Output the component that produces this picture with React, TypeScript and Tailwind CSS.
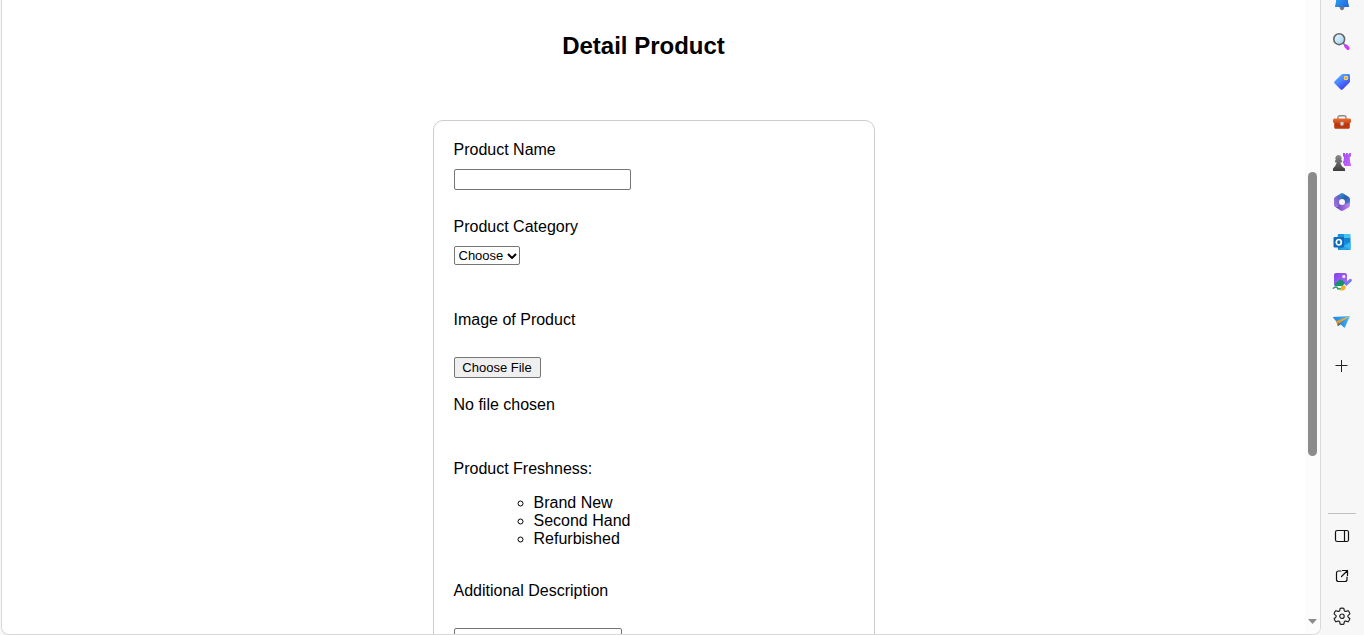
import { useRef, useState, type ReactNode } from "react";

function Icon({ children }: { children: ReactNode }) {
  return (
    <svg viewBox="0 0 20 20" className="size-5" fill="none" aria-hidden="true">
      {children}
    </svg>
  );
}

function BellIcon() {
  return (
    <Icon>
      <defs>
        <linearGradient id="bell" x1="0" y1="0" x2="1" y2="1">
          <stop stopColor="#36b4f0" />
          <stop offset="1" stopColor="#1a62e0" />
        </linearGradient>
      </defs>
      <path d="M7.500 15h5c-.2 2-1.200 3.200-2.500 3.200S7.700 17 7.500 15Z" fill="#777" />
      <path d="M10 0a6 6 0 0 0-6 6v4l-1 4.200c-.1.500.2.900.7.900h12.600c.5 0 .8-.4.700-.9L16 10V6a6 6 0 0 0-6-6Z" fill="url(#bell)" />
    </Icon>
  );
}

function SearchIcon() {
  return (
    <Icon>
      <defs>
        <linearGradient id="lens" x1="0" y1="0" x2="1" y2="1">
          <stop stopColor="#e8f8ff" />
          <stop offset="1" stopColor="#9fd4f5" />
        </linearGradient>
      </defs>
      <path d="m11 11 3 3" stroke="#777" strokeWidth="1.600" />
      <path d="m13.800 14 2.200 2.200" stroke="#cb3df5" strokeWidth="3.400" strokeLinecap="round" />
      <circle cx="7.200" cy="7.200" r="5.400" fill="url(#lens)" stroke="#666" strokeWidth="1.600" />
    </Icon>
  );
}

function TagIcon() {
  return (
    <Icon>
      <defs>
        <linearGradient id="tag" x1="0" y1="0" x2=".7" y2="1">
          <stop stopColor="#66b8ff" />
          <stop offset=".5" stopColor="#4a84ff" />
          <stop offset="1" stopColor="#4030e8" />
        </linearGradient>
      </defs>
      <path d="M10.700 2h5.800c.9 0 1.500.6 1.500 1.500v5.800c0 .5-.2.900-.5 1.200l-6.700 6.800c-.7.700-1.700.7-2.400 0l-5.700-5.700c-.7-.7-.7-1.700 0-2.400l6.800-6.700c.3-.3.700-.5 1.200-.5Z" fill="url(#tag)" />
      <circle cx="14" cy="6" r="1.600" fill="#7d87b0" stroke="#ffd34d" strokeWidth="1.500" />
    </Icon>
  );
}

function ToolboxIcon() {
  return (
    <Icon>
      <defs>
        <linearGradient id="box" x1="0" y1="0" x2="0" y2="1">
          <stop stopColor="#ed6b31" />
          <stop offset="1" stopColor="#c94210" />
        </linearGradient>
      </defs>
      <path d="M6 7V5.600C6 4.500 6.800 3.800 7.800 3.800h4.400c1 0 1.800.7 1.800 1.800V7" stroke="#8a8a8a" strokeWidth="1.400" />
      <path d="M2.200 10h15.600v5.300c0 .9-.6 1.500-1.500 1.500H3.700c-.9 0-1.500-.6-1.500-1.500V10Z" fill="#bd380c" />
      <path d="M2.500 6.500h15c.8 0 1.500.7 1.500 1.500v2.500l-7 1.300H8l-7-1.300V8c0-.8.700-1.500 1.500-1.500Z" fill="url(#box)" />
      <path d="M8.300 10h3.400v2c0 1-.7 1.700-1.700 1.700S8.300 13 8.300 12v-2Z" fill="#d4d4d4" stroke="#999" strokeWidth=".5" />
    </Icon>
  );
}

function ChessIcon() {
  return (
    <Icon>
      <defs>
        <linearGradient id="rook" x1="0" y1="0" x2="1" y2="1">
          <stop stopColor="#9b4df8" />
          <stop offset="1" stopColor="#d065fb" />
        </linearGradient>
        <linearGradient id="pawn" x1="0" y1="0" x2="0" y2="1">
          <stop stopColor="#8c8c8c" />
          <stop offset="1" stopColor="#3d3d3d" />
        </linearGradient>
      </defs>
      <path d="M11 1h2v1.300h1V1h2v1.300h1V1h2v3l-1.300 1.500.5 5.500.8 1v2h-6.500l-1.800-4 .8-1 .5-3.500L11 4V1Z" fill="url(#rook)" />
      <path d="M6.500 3a3.200 3.200 0 0 0-2.400 5.300H3v2h1.500c-.1 2-.9 3.400-2.200 4.700L1 16.500V19h12v-2.500L10.700 15c-1.300-1.300-2.100-2.700-2.200-4.700H10v-2H8.900A3.200 3.200 0 0 0 6.500 3Z" fill="url(#pawn)" />
    </Icon>
  );
}

function SuiteIcon() {
  return (
    <Icon>
      <defs>
        <linearGradient id="suiteA" x1="0" y1="1" x2="1" y2="0">
          <stop stopColor="#a878e0" />
          <stop offset="1" stopColor="#4a4fc0" />
        </linearGradient>
        <linearGradient id="suiteB" x1="0" y1="0" x2="1" y2="1">
          <stop stopColor="#2fa0dc" />
          <stop offset=".45" stopColor="#2a5bab" />
          <stop offset="1" stopColor="#5a8fe0" />
        </linearGradient>
        <linearGradient id="suiteC" x1="0" y1="0" x2="1" y2="0">
          <stop stopColor="#5d3cb5" />
          <stop offset="1" stopColor="#c58af2" />
        </linearGradient>
      </defs>
      <path d="M9 1.500 3.500 4.800C2.600 5.300 2 6.200 2 7.300v5.500c0 1.200.7 2 1.600 2.200L7 14l3-4V1.200l-1 .3Z" fill="url(#suiteA)" />
      <path d="m9 1.500 1-.3c.5 0 .9.200 1.300.4l5.200 3.200c.9.600 1.500 1.400 1.500 2.500v5L14 14l-4-4-2-4c-1-1.500-.2-3.500 1-4.500Z" fill="url(#suiteB)" />
      <path d="M3 14.800c2.200.2 4-.7 4-2.600l3-2 4 1.500 4-1v2.200c0 1-.6 2-1.400 2.500l-5.200 3.100c-.9.500-1.900.5-2.800 0L3 14.800Z" fill="url(#suiteC)" />
      <circle cx="10" cy="9.900" r="3" fill="#f7f7f7" />
    </Icon>
  );
}

function OutlookIcon() {
  return (
    <Icon>
      <path d="M6.500 2h11c.5 0 .8.300.8.800V11H5.700V2.800c0-.5.300-.8.800-.8Z" fill="#1b93e0" />
      <path d="M12 2h5.500c.5 0 .8.300.8.800V6H12V2Z" fill="#45c4f7" />
      <path d="M5.700 6H12v4H5.700V6Z" fill="#0364b8" />
      <path d="M12 6h6.300v4H12V6Z" fill="#1583d4" />
      <path d="m6 9 12.500 1v7c0 .6-.4 1-1 1H6.800c-.6 0-1-.4-1-1L6 9Z" fill="#168ddd" />
      <path d="m18.500 10-7 4.200 6.500 3.600c.3-.2.500-.5.500-.8v-7Z" fill="#35b8f1" />
      <path d="m11.500 14.200 6.500 3.600H7l4.500-3.600Z" fill="#2aa5e8" />
      <rect x="1.500" y="5" width="10.500" height="10.500" rx="1" fill="#0f6cbd" />
      <ellipse cx="6.800" cy="10.200" rx="2.500" ry="2.700" stroke="white" strokeWidth="1.700" />
    </Icon>
  );
}

function DesignerIcon() {
  return (
    <Icon>
      <defs>
        <linearGradient id="photo" x1="0" y1="0" x2="1" y2="1">
          <stop stopColor="#7f45ea" />
          <stop offset="1" stopColor="#b86bfa" />
        </linearGradient>
      </defs>
      <rect x="2" y="1" width="13" height="13" rx="2" fill="url(#photo)" />
      <path d="M2.300 12.500 7.200 8c.9-.8 2-.8 2.800 0l4.600 4.500c-.4.900-1 1.500-1.700 1.500H4c-.8 0-1.400-.5-1.700-1.500Z" fill="#12936a" />
      <circle cx="11.800" cy="4.400" r="1.500" fill="white" />
      <path d="M1.300 16.300c2.200-1.800 4-1.500 4.200-.2.200 1.400 1.500 1 2.800.4" stroke="#239c72" strokeWidth="1.400" strokeLinecap="round" />
      <path d="M18.300 8.300 13 13.200" stroke="#7478f2" strokeWidth="3" strokeLinecap="round" />
      <path d="m12.300 11.700 2.700 2.700-1.700 1.500-2.500-2.500 1.500-1.700Z" fill="#e4e8f6" />
      <path d="M11 13.200c1.600.1 2.600 1.200 2.600 2.700-.7 2.300-3 2.900-5.600 2.500 1.300-1.200.3-4.200 3-5.200Z" fill="#f5ad1b" />
    </Icon>
  );
}

function PlaneIcon() {
  return (
    <Icon>
      <defs>
        <linearGradient id="wing" x1="0" y1="0" x2="1" y2="0">
          <stop stopColor="#1b83e6" />
          <stop offset="1" stopColor="#55baf7" />
        </linearGradient>
        <linearGradient id="fold" x1="0" y1="1" x2="1" y2="0">
          <stop stopColor="#d98512" />
          <stop offset="1" stopColor="#ffc02e" />
        </linearGradient>
      </defs>
      <path d="M1.300 5 18 4 4.500 9.800 1 5.500c-.2-.3 0-.5.300-.5Z" fill="url(#wing)" />
      <path d="M18 4 4 9.300l1.700 4.900L8 12l10-8Z" fill="url(#fold)" />
      <path d="m5.700 14.200.9-3.100 2.200 1.200-3.100 1.900Z" fill="#4b5b66" />
      <path d="M7.300 11.300 18 4l-5 11.300c-.2.500-.6.600-1 .3l-4.700-4.300Z" fill="url(#wing)" />
    </Icon>
  );
}

function PlusIcon() {
  return (
    <Icon>
      <path d="M9.500 4v12M3.500 9.500h12" stroke="#222" />
    </Icon>
  );
}

function PanelIcon() {
  return (
    <Icon>
      <rect x="3.500" y="4.500" width="13" height="11" rx="1.800" stroke="#111" strokeWidth="1.200" />
      <path d="M12.500 4.500v11" stroke="#111" strokeWidth="1.200" />
    </Icon>
  );
}

function ExternalIcon() {
  return (
    <Icon>
      <path d="M9 5H6.500C5.200 5 4.500 5.800 4.500 7v6.500c0 1.200.8 2 2 2H13c1.200 0 2-.8 2-2V11M10.500 4.500h5v5M15.500 4.500l-6 6" stroke="#111" strokeWidth="1.200" strokeLinecap="round" strokeLinejoin="round" />
    </Icon>
  );
}

function GearIcon() {
  return (
    <Icon>
      <path d="M8.200 2.300c1.200-.3 2.400-.3 3.600 0l.5 2.200c.2.700.9 1.100 1.600.9l2.200-.7c.9.900 1.500 2 1.800 3.200l-1.700 1.500c-.5.500-.5 1.300 0 1.800l1.700 1.500c-.3 1.200-.9 2.200-1.800 3.100l-2.200-.7c-.7-.2-1.400.2-1.600.9l-.5 2.200c-1.200.3-2.400.3-3.600 0L7.700 16c-.2-.7-.9-1.100-1.600-.9l-2.200.7a7 7 0 0 1-1.800-3.100l1.700-1.500c.5-.5.500-1.300 0-1.800L2.100 7.900c.3-1.200.9-2.300 1.800-3.200l2.200.7c.7.200 1.400-.2 1.600-.9l.5-2.200Z" stroke="#222" strokeWidth="1.200" strokeLinejoin="round" />
      <circle cx="10" cy="10.200" r="2.200" stroke="#222" strokeWidth="1.200" />
    </Icon>
  );
}

function SideButton({ label, children }: { label: string; children: ReactNode }) {
  return (
    <button type="button" aria-label={label} className="flex h-10 w-full shrink-0 items-center justify-center">
      {children}
    </button>
  );
}

function Sidebar() {
  return (
    <nav aria-label="Browser tools" className="flex w-[43px] shrink-0 flex-col justify-between overflow-hidden bg-[#f7f7f7] pr-px">
      <div className="-mt-[18px] flex flex-col">
        <SideButton label="Notifications"><BellIcon /></SideButton>
        <SideButton label="Search"><SearchIcon /></SideButton>
        <SideButton label="Shopping"><TagIcon /></SideButton>
        <SideButton label="Tools"><ToolboxIcon /></SideButton>
        <SideButton label="Games"><ChessIcon /></SideButton>
        <SideButton label="Microsoft 365"><SuiteIcon /></SideButton>
        <SideButton label="Outlook"><OutlookIcon /></SideButton>
        <SideButton label="Image Creator"><DesignerIcon /></SideButton>
        <SideButton label="Drop"><PlaneIcon /></SideButton>
        <div className="pt-1">
          <SideButton label="Customize"><PlusIcon /></SideButton>
        </div>
      </div>
      <div className="-mb-px flex flex-col">
        <hr className="mx-[7px] mb-0.5 border-[#c0c0c0]" />
        <SideButton label="Toggle sidebar"><PanelIcon /></SideButton>
        <SideButton label="Open in new window"><ExternalIcon /></SideButton>
        <SideButton label="Settings"><GearIcon /></SideButton>
      </div>
    </nav>
  );
}

function ScrollTrack() {
  return (
    <div className="flex w-[15px] shrink-0 flex-col items-center justify-between bg-[#fcfcfc] pb-2.5" aria-hidden="true">
      <div className="mt-[172px] h-[284px] w-[9px] rounded-full bg-[#8b8b8b]" />
      <svg viewBox="0 0 9 5" className="h-[5px] w-[9px]" fill="#8b8b8b">
        <path d="M0 0h9L4.500 5Z" />
      </svg>
    </div>
  );
}

function ProductForm() {
  const fileRef = useRef<HTMLInputElement>(null);
  const [fileName, setFileName] = useState("No file chosen");

  return (
    <form className="mx-auto flex w-full max-w-[442px] flex-col items-start rounded-[10px] border border-[#ccc] p-5">
      <label htmlFor="name">Product Name</label>
      <input id="name" type="text" className="mt-2.5 h-[21px] w-[177px] rounded-xs border border-[#767676] px-0.5 text-[13px]" />

      <label htmlFor="category" className="mt-7">Product Category</label>
      <div className="relative mt-2.5">
        <select id="category" className="block h-[19px] w-[66px] appearance-none rounded-xs border border-[#767676] bg-white pl-1 text-[13px] leading-4">
          <option>Choose</option>
        </select>
        <svg viewBox="0 0 10 6" className="pointer-events-none absolute top-[7px] right-[3px] h-1.5 w-2.5" fill="none" aria-hidden="true">
          <path d="m1 1 4 4 4-4" stroke="black" strokeWidth="2" />
        </svg>
      </div>

      <label htmlFor="image" className="mt-[46px]">Image of Product</label>
      <input
        ref={fileRef}
        id="image"
        type="file"
        className="hidden"
        onChange={(event) => setFileName(event.target.files?.[0]?.name ?? "No file chosen")}
      />
      <button
        type="button"
        onClick={() => fileRef.current?.click()}
        className="mt-7 h-[21px] w-[87px] rounded-xs border border-[#767676] bg-[#efefef] text-[13px] leading-4"
      >
        Choose File
      </button>
      <p className="mt-[18px]">{fileName}</p>

      <p className="mt-[46px]">Product Freshness:</p>
      <ul className="mt-4 list-[circle] pl-20">
        <li>Brand New</li>
        <li>Second Hand</li>
        <li>Refurbished</li>
      </ul>

      <label htmlFor="description" className="mt-[34px]">Additional Description</label>
      <textarea id="description" rows={2} className="mt-7 w-[168px] rounded-xs border border-[#767676] p-0.5 text-[13px]" />
    </form>
  );
}

export default function App() {
  return (
    <div className="flex h-screen overflow-hidden bg-[#f7f7f7] font-['Liberation_Sans',Arial,sans-serif] text-base leading-[18px] text-black">
      <div className="ml-px flex min-w-0 flex-1 overflow-hidden rounded-b-lg border border-t-0 border-[#d9d9d9] bg-white">
        <main className="min-w-0 flex-1 overflow-hidden">
          <h1 className="pt-8 pr-5 pb-[60px] text-center text-2xl leading-7 font-bold">Detail Product</h1>
          <ProductForm />
        </main>
        <ScrollTrack />
      </div>
      <Sidebar />
    </div>
  );
}
